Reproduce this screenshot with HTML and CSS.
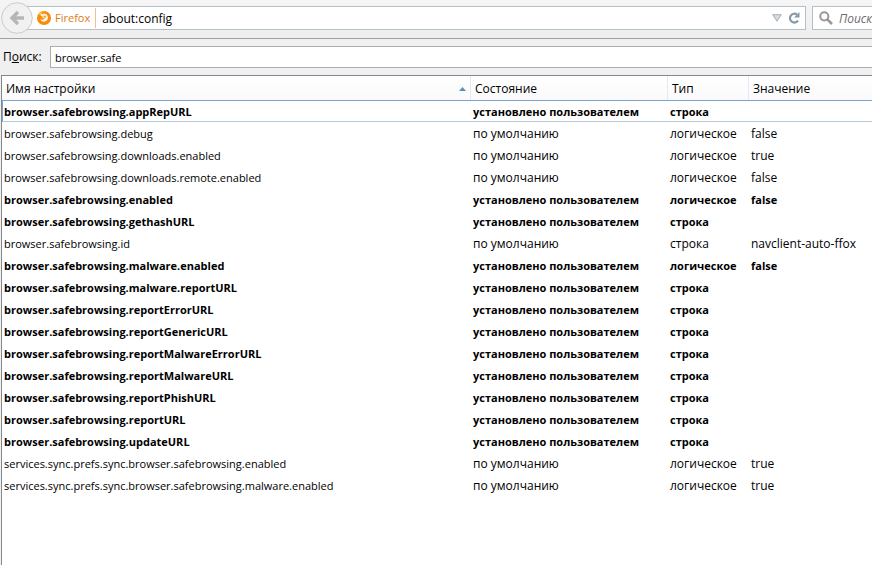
FILE: index.html
```html
<!DOCTYPE html>
<html lang="ru">
<head>
<meta charset="utf-8">
<title>about:config</title>
<link rel="stylesheet" href="styles.css">
</head>
<body>
<header class="toolbar">
  <button class="back" type="button" aria-label="Назад">
    <svg width="32" height="32" viewBox="0 0 32 32"><circle cx="16" cy="16" r="15.3" fill="#f1f1f1" stroke="#c9cbcd"/><path d="M17 10L11 16L17 22M11 16H23" fill="none" stroke="#b4b6b8" stroke-width="3.4"/></svg>
  </button>
  <div class="urlbar">
    <span class="identity">
      <svg width="14" height="14" viewBox="0 0 14 14"><circle cx="7" cy="7" r="7" fill="#f68b0c"/><path d="M1 4Q3 0 8 0Q4 2 4 4Z" fill="#fbb82b"/><path d="M3.6 2.2L5.4 3.2Q7 1.8 9 3Q11.6 4.8 10.8 8Q9.6 11 6.4 10.8Q3.8 10.3 3 7.6Q4.6 9.3 6.3 8.6L7.6 7.6L5.1 6.8L5.8 5.5L3.8 5Z" fill="#fff3d6"/><path d="M7 4.5L9 5L8.4 7L6.2 6.6Z" fill="#f9a024"/></svg>
      <span>Firefox</span>
    </span>
    <input class="url" type="text" aria-label="Адрес" value="about:config">
    <button class="icon" type="button" aria-label="Журнал"><svg width="10" height="8" viewBox="0 0 10 8"><path d="M.7.7H9.3L5 7.2Z" fill="#d5dbe0" stroke="#a4afb8"/></svg></button>
    <button class="icon" type="button" aria-label="Обновить"><svg width="12" height="12" viewBox="0 0 12 12"><path d="M9 2.6A4.4 4.4 0 1 0 10 8.6" fill="none" stroke="#8699a9" stroke-width="2.2"/><path d="M11.5 0V5.5H6Z" fill="#8699a9"/></svg></button>
  </div>
  <div class="searchbar">
    <svg width="14" height="14" viewBox="0 0 14 14"><circle cx="5.3" cy="5.3" r="4.1" fill="none" stroke="#999" stroke-width="2"/><path d="M8.3 8.3L13 13" stroke="#999" stroke-width="2.6"/></svg>
    <input class="search" type="text" aria-label="Поиск в сети" placeholder="Поиск">
  </div>
</header>
<main class="config">
  <div class="filter">
    <label for="filter">П<u>о</u>иск:</label>
    <input id="filter" type="text" value="browser.safe">
  </div>
  <div class="tree">
    <table>
      <colgroup><col class="c-name"><col class="c-state"><col class="c-type"><col></colgroup>
      <thead><tr><th scope="col"><span class="sorted">Имя настройки <svg width="7" height="4" viewBox="0 0 7 4"><path d="M0 4L3.5 0L7 4Z" fill="#5793b5"/></svg></span></th><th scope="col">Состояние</th><th scope="col">Тип</th><th scope="col">Значение</th></tr></thead>
      <tbody>
        <tr class="user current"><td>browser.safebrowsing.appRepURL</td><td>установлено пользователем</td><td>строка</td><td></td></tr>
        <tr><td>browser.safebrowsing.debug</td><td>по умолчанию</td><td>логическое</td><td>false</td></tr>
        <tr><td>browser.safebrowsing.downloads.enabled</td><td>по умолчанию</td><td>логическое</td><td>true</td></tr>
        <tr><td>browser.safebrowsing.downloads.remote.enabled</td><td>по умолчанию</td><td>логическое</td><td>false</td></tr>
        <tr class="user"><td>browser.safebrowsing.enabled</td><td>установлено пользователем</td><td>логическое</td><td>false</td></tr>
        <tr class="user"><td>browser.safebrowsing.gethashURL</td><td>установлено пользователем</td><td>строка</td><td></td></tr>
        <tr><td>browser.safebrowsing.id</td><td>по умолчанию</td><td>строка</td><td>navclient-auto-ffox</td></tr>
        <tr class="user"><td>browser.safebrowsing.malware.enabled</td><td>установлено пользователем</td><td>логическое</td><td>false</td></tr>
        <tr class="user"><td>browser.safebrowsing.malware.reportURL</td><td>установлено пользователем</td><td>строка</td><td></td></tr>
        <tr class="user"><td>browser.safebrowsing.reportErrorURL</td><td>установлено пользователем</td><td>строка</td><td></td></tr>
        <tr class="user"><td>browser.safebrowsing.reportGenericURL</td><td>установлено пользователем</td><td>строка</td><td></td></tr>
        <tr class="user"><td>browser.safebrowsing.reportMalwareErrorURL</td><td>установлено пользователем</td><td>строка</td><td></td></tr>
        <tr class="user"><td>browser.safebrowsing.reportMalwareURL</td><td>установлено пользователем</td><td>строка</td><td></td></tr>
        <tr class="user"><td>browser.safebrowsing.reportPhishURL</td><td>установлено пользователем</td><td>строка</td><td></td></tr>
        <tr class="user"><td>browser.safebrowsing.reportURL</td><td>установлено пользователем</td><td>строка</td><td></td></tr>
        <tr class="user"><td>browser.safebrowsing.updateURL</td><td>установлено пользователем</td><td>строка</td><td></td></tr>
        <tr><td>services.sync.prefs.sync.browser.safebrowsing.enabled</td><td>по умолчанию</td><td>логическое</td><td>true</td></tr>
        <tr><td>services.sync.prefs.sync.browser.safebrowsing.malware.enabled</td><td>по умолчанию</td><td>логическое</td><td>true</td></tr>
      </tbody>
    </table>
  </div>
</main>
</body>
</html>
```
FILE: styles.css
```css
* { box-sizing: border-box; }
body {
  margin: 0;
  min-height: 100vh;
  display: flex;
  flex-direction: column;
  overflow: hidden;
  background: #f0f0f0;
  color: #000;
  font: 12px/16px "Open Sans", "Noto Sans", sans-serif;
}
button, input { font: inherit; color: inherit; border: 0; padding: 0; margin: 0; background: none; outline: 0; }
svg { display: block; flex: none; }

.toolbar {
  display: flex;
  align-items: center;
  height: 39px;
  padding: 0 0 3px 1px;
  border-bottom: 1px solid #a0a0a0;
  background: linear-gradient(#f5f5f5, #eee);
}
.back { position: relative; z-index: 1; flex: none; }
.urlbar, .searchbar {
  display: flex;
  align-items: center;
  height: 24px;
  background: #fff;
  border: 1px solid #b4c0c8;
}
.urlbar { flex: 1; min-width: 0; margin-left: -8px; padding: 0 5px 0 11px; gap: 6px; }
.identity {
  display: flex;
  align-items: center;
  gap: 4px;
  height: 20px;
  padding-right: 5px;
  border-right: 1px solid #f3c08c;
  color: #e07a1a;
  font-size: 11px;
}
.url, .search { height: 22px; min-width: 0; padding-top: 2px; }
.url { flex: 1; }
.search { width: 100%; }
.search::placeholder { color: #6d6d6d; font-style: italic; opacity: 1; }
.searchbar { width: 60px; margin-left: 6px; padding-left: 6px; gap: 6px; border-right: 0; }

.config { flex: 1; display: flex; flex-direction: column; }
.filter { display: flex; align-items: center; gap: 8px; padding: 7px 0 7px 3px; }
.filter label { width: 39px; white-space: nowrap; }
.filter input {
  flex: 1;
  min-width: 0;
  height: 22px;
  padding: 0 4px;
  background: #fff;
  border: 1px solid #abadb3;
  border-right: 0;
  font-size: 11px;
}
.tree {
  flex: 1;
  margin-left: 1px;
  background: #fff;
  border: solid #828790;
  border-width: 1px 0 0 1px;
}
table { width: 100%; table-layout: fixed; border-collapse: separate; border-spacing: 0; }
.c-name { width: 469px; }
.c-state { width: 197px; }
.c-type { width: 81px; }
th, td { text-align: left; white-space: nowrap; font-weight: 400; }
th {
  height: 24px;
  padding: 2px 4px 0;
  background: linear-gradient(#fff, #fafafc);
  border-right: 1px solid #e1ebf7;
}
th:last-child { border-right: 0; }
.sorted { display: flex; align-items: center; justify-content: space-between; }
td { height: 22px; padding: 2px 2px 0; }
td:first-child { font-size: 11px; }
.user td { font-weight: 700; font-size: 11px; }
.current td { border: solid #7da2ce; border-width: 1px 0; border-bottom-color: #b4c8dc; }
.current td:first-child { border-left-width: 1px; padding-left: 1px; }
```
